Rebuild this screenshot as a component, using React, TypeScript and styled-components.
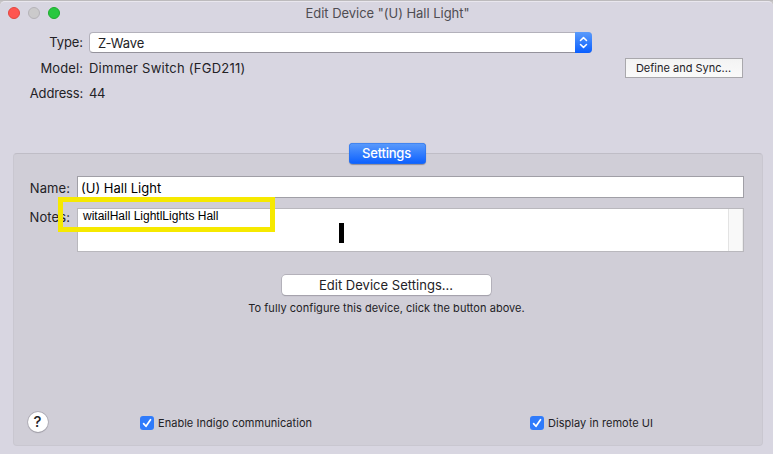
import React from "react";
import styled, { createGlobalStyle } from "styled-components";

const GlobalStyle = createGlobalStyle`
  * { box-sizing: border-box; }
  html, body { margin: 0; padding: 0; }
  body { background: #c4c2c4; overflow: hidden; }
`;

const Desktop = styled.div`
  width: 773px;
  height: 454px;
  padding-top: 1px;
  background: linear-gradient(#bdbbbd 1px, #c8c6c8 1px);
  overflow: hidden;
`;

const Window = styled.main`
  display: flex;
  flex-direction: column;
  width: 773px;
  height: 453px;
  border-top: 1px solid #e9e7ee;
  border-radius: 5px 5px 0 0;
  background: #d8d6e1;
  color: #232226;
  font: 13px/20px Inter, "Open Sans", sans-serif;
  white-space: nowrap;
`;

const TitleBar = styled.header`
  display: grid;
  grid-template-columns: 60px 1fr 66px;
  align-items: center;
  height: 21px;
  padding: 0 0 0 8px;
`;

const Lights = styled.div`
  display: flex;
  gap: 8px;
`;

const Light = styled.span<{ $fill: string; $edge: string }>`
  width: 12px;
  height: 12px;
  border-radius: 50%;
  border: 1px solid ${(p) => p.$edge};
  background: ${(p) => p.$fill};
`;

const Title = styled.h1`
  margin: 0;
  font-size: 13px;
  font-weight: 400;
  letter-spacing: -0.03px;
  text-align: center;
  color: #4f4d52;
`;

const Summary = styled.section`
  display: grid;
  grid-template-columns: 83px 503px 1fr;
  grid-template-rows: 21px 20px 20px;
  column-gap: 6px;
  row-gap: 5px;
  align-items: center;
  padding: 9px 30px 0 0;
  margin-bottom: 50px;
`;

const Label = styled.label<{ $track?: number; $lift?: number }>`
  text-align: right;
  letter-spacing: ${(p) => p.$track ?? 0}px;
  margin-top: ${(p) => -(p.$lift ?? 0)}px;
`;

const Value = styled.span<{ $track?: number }>`
  letter-spacing: ${(p) => p.$track ?? 0}px;
`;

const Popup = styled.button`
  display: flex;
  align-items: stretch;
  width: 503px;
  height: 21px;
  padding: 0;
  border: 1px solid #b3b1bb;
  border-bottom-color: #94929b;
  border-radius: 4px;
  background: #fff;
  color: #232226;
  font: inherit;
  letter-spacing: -0.13px;
  text-align: left;
`;

const PopupText = styled.span`
  flex: 1;
  padding-left: 8px;
`;

const PopupArrows = styled.span`
  display: flex;
  align-items: center;
  justify-content: center;
  width: 17px;
  height: 21px;
  margin: -1px -1px -1px 0;
  border-radius: 0 4px 4px 0;
  background: linear-gradient(#5a9bfb, #0a5fff);
`;

const SquareButton = styled.button`
  justify-self: end;
  width: 118px;
  height: 20px;
  padding: 0 1px 0 0;
  border: 1px solid #a9a8ac;
  background: linear-gradient(#f3f3f3, #fafafa);
  color: #232226;
  font: 11px/18px Inter, sans-serif;
`;

const Panel = styled.section`
  display: flex;
  flex-direction: column;
  align-items: center;
  width: 750px;
  height: 293px;
  margin-left: 12.5px;
  border: 1px solid #c9c7d0;
  border-top-color: #bfbdc6;
  border-radius: 4px;
  background: #d0ced7;
`;

const Tab = styled.button`
  width: 77px;
  height: 21px;
  margin-top: -11px;
  padding: 0 2px 0 0;
  border: 0;
  border-radius: 4px;
  background: linear-gradient(#5c9cfb, #0a5fff);
  box-shadow: inset 0 0 0 0.5px #2870e8, 0 0.5px 1px #8f8d9a;
  color: #fff;
  font: 500 13px/21px Inter, sans-serif;
  letter-spacing: -0.22px;
`;

const Fields = styled.div`
  display: grid;
  grid-template-columns: 56.5px 667px;
  column-gap: 7px;
  row-gap: 10px;
  align-self: stretch;
  margin-top: 12px;
`;

const NameField = styled.div`
  height: 22px;
  padding: 1px 0 0 3px;
  border: 1px solid #a09fa6;
  background: #fff;
  color: #000;
`;

const NotesField = styled.div`
  position: relative;
  display: flex;
  justify-content: space-between;
  height: 44px;
  border: 1px solid #b9b8bd;
  background: #fff;
  color: #000;
  font: 12px/14px "Liberation Sans", Arial, sans-serif;
`;

const NotesText = styled.span`
  padding: 0 0 0 5px;
`;

const Scrollbar = styled.span`
  width: 15px;
  border-left: 1px solid #e3e3e3;
  border-right: 1px solid #ececec;
  background: #f9f9f9;
`;

const Highlight = styled.span`
  position: absolute;
  left: -20px;
  top: -12px;
  width: 217px;
  height: 35px;
  border: 5px solid #f6e900;
`;

const CursorBlock = styled.span`
  position: absolute;
  left: 261px;
  top: 14px;
  width: 5px;
  height: 20px;
  background: #000;
`;

const PushButton = styled.button`
  width: 209px;
  height: 20px;
  margin: 23px 3px 0 0;
  padding: 0;
  border: 0;
  border-radius: 4px;
  background: #fff;
  box-shadow: 0 0 0 0.7px #aaa8b1, 0 1px 1px #94929b;
  color: #232226;
  font: 13px/20px Inter, sans-serif;
  letter-spacing: 0.02px;
`;

const Hint = styled.p`
  margin: 3px 2px 0 0;
  font-size: 11px;
  letter-spacing: 0.045px;
`;

const Footer = styled.footer`
  display: grid;
  grid-template-columns: 112.5px 390px 1fr;
  align-items: center;
  align-self: stretch;
  margin-top: 92px;
  padding-left: 14px;
`;

const HelpButton = styled.button`
  width: 20px;
  height: 20px;
  padding: 0;
  border: 0;
  border-radius: 50%;
  background: #fff;
  box-shadow: 0 0 0 0.7px #aaa8b1, 0 1px 1px #94929b;
  color: #232226;
  font: 500 15px/20px Inter, sans-serif;
`;

const CheckItem = styled.label<{ $track: number }>`
  display: flex;
  align-items: center;
  gap: 4px;
  height: 20px;
  margin-top: 3px;
  font-size: 11px;
  letter-spacing: ${(p) => p.$track}px;
`;

const Box = styled.span`
  display: flex;
  width: 14px;
  height: 14px;
  border-radius: 3px;
  background: #2f7bfb;
`;

function Check({ label, track }: { label: string; track: number }) {
  return (
    <CheckItem $track={track}>
      <Box>
        <svg width="14" height="14" viewBox="0 0 14 14" fill="none" stroke="#fff" strokeWidth="1.7" strokeLinecap="round" strokeLinejoin="round">
          <path d="M3.6 7.6 6 10.3 10.5 3.7" />
        </svg>
      </Box>
      {label}
    </CheckItem>
  );
}

export default function App() {
  return (
    <Desktop>
      <GlobalStyle />
      <Window>
        <TitleBar>
          <Lights>
            <Light $fill="#ff5550" $edge="#e2463f" />
            <Light $fill="#cbcacb" $edge="#b5b3b8" />
            <Light $fill="#28c840" $edge="#1dab2c" />
          </Lights>
          <Title>Edit Device "(U) Hall Light"</Title>
        </TitleBar>
        <Summary>
          <Label $track={-0.08} $lift={2}>Type:</Label>
          <Popup>
            <PopupText>Z-Wave</PopupText>
            <PopupArrows>
              <svg width="9" height="13" viewBox="0 0 9 13" fill="none" stroke="#fff" strokeWidth="1.5" strokeLinecap="round" strokeLinejoin="round">
                <path d="M1.5 4.5 4.5 1.6 7.5 4.5M1.5 8.5 4.5 11.4 7.5 8.5" />
              </svg>
            </PopupArrows>
          </Popup>
          <span />
          <Label $track={0.1}>Model:</Label>
          <Value $track={0.24}>Dimmer Switch (FGD211)</Value>
          <SquareButton>Define and Sync...</SquareButton>
          <Label $track={-0.18}>Address:</Label>
          <Value $track={-0.3}>44</Value>
        </Summary>
        <Panel>
          <Tab>Settings</Tab>
          <Fields>
            <Label $track={0.08} $lift={-2}>Name:</Label>
            <NameField>(U) Hall Light</NameField>
            <Label $track={0.1} $lift={1}>Notes:</Label>
            <NotesField>
              <NotesText>witailHall LightlLights Hall</NotesText>
              <Scrollbar />
              <Highlight />
              <CursorBlock />
            </NotesField>
          </Fields>
          <PushButton>Edit Device Settings...</PushButton>
          <Hint>To fully configure this device, click the button above.</Hint>
          <Footer>
            <HelpButton>?</HelpButton>
            <Check label="Enable Indigo communication" track={0.03} />
            <Check label="Display in remote UI" track={0.05} />
          </Footer>
        </Panel>
      </Window>
    </Desktop>
  );
}
